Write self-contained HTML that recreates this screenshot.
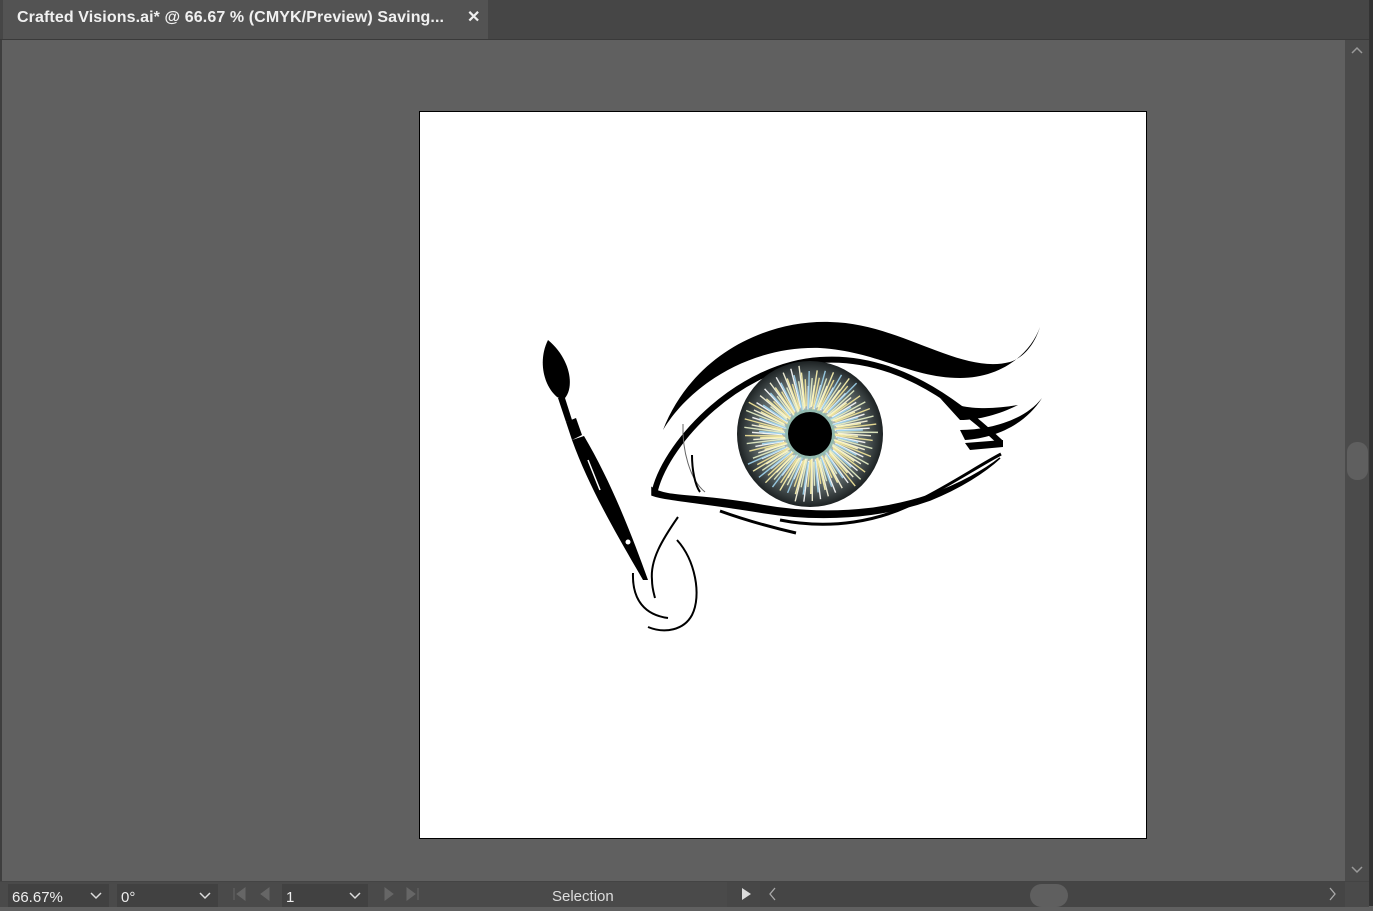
<!DOCTYPE html>
<html><head><meta charset="utf-8"><style>
html,body{margin:0;padding:0;width:1373px;height:906px;overflow:hidden;background:#606060;font-family:"Liberation Sans",sans-serif}
#tabbar{position:absolute;left:0;top:0;width:1373px;height:39px;background:#464646;border-bottom:1px solid #3a3a3a}
#tab{position:absolute;left:3px;top:0;width:485px;height:39px;background:#535353;color:#f0f0f0;font-weight:bold;font-size:16px;line-height:36px}
#tab span{position:absolute;left:14px;letter-spacing:0.1px}
#tab b{position:absolute;left:464px;font-size:16px}
#leftedge{position:absolute;left:0;top:40px;width:2px;height:841px;background:#3e3e3e}
#vscroll{position:absolute;left:1345px;top:40px;width:24px;height:841px;background:#4b4b4b}
#rightedge{position:absolute;left:1369px;top:0;width:4px;height:906px;background:#333}
#thumb{position:absolute;left:1347px;top:442px;width:21px;height:38px;border-radius:10px;background:#5f5f5f}
#art{position:absolute;left:419px;top:111px;width:726px;height:726px;background:#fff;border:1px solid #000}
#bottom{position:absolute;left:0;top:881px;width:1369px;height:25px;background:#4a4a4a;border-top:1px solid #444}
.fld{position:absolute;top:2px;height:23px;background:#414141;color:#eee;font-size:15px;line-height:27px}
</style></head><body>
<div id="tabbar"><div id="tab"><span>Crafted Visions.ai* @ 66.67 % (CMYK/Preview) Saving...</span><b>✕</b></div></div>
<div id="leftedge"></div>
<div id="vscroll"></div>
<div id="thumb"></div>
<div id="rightedge"></div>
<svg style="position:absolute;left:1350px;top:46px" width="14" height="10"><path d="M2 7 L7 2 L12 7" stroke="#9a9a9a" stroke-width="1.5" fill="none"/></svg>
<svg style="position:absolute;left:1350px;top:864px" width="14" height="10"><path d="M2 3 L7 8 L12 3" stroke="#9a9a9a" stroke-width="1.5" fill="none"/></svg>
<div id="art"></div>
<svg style="position:absolute;left:0;top:0" width="1373" height="906">
<defs>
<radialGradient id="ir" cx="50%" cy="50%" r="50%">
<stop offset="0" stop-color="#dfe8e6"/><stop offset="0.45" stop-color="#9aa5a4"/><stop offset="0.8" stop-color="#4d5657"/><stop offset="1" stop-color="#1d2223"/>
</radialGradient>
</defs>
<path d="M663 430 C690 360 760 320 830 322 C900 323 960 375 1010 362 C1025 357 1035 343 1040 327 C1030 355 1000 378 960 378 C910 378 880 352 820 348 C750 346 690 385 663 430Z" fill="#000"/>
<path d="M655 490 C668 440 740 365 820 360 C890 355 950 395 1000 442" stroke="#000" stroke-width="6" fill="none"/>
<path d="M940 398 C960 410 990 410 1018 405 C1000 414 980 420 960 420Z" fill="#000"/>
<path d="M960 430 C990 430 1025 420 1042 398 C1025 425 995 438 965 440Z" fill="#000"/>
<path d="M965 443 L1003 440 L1003 447 L970 450Z" fill="#000"/>
<path d="M652 488 C665 498 700 494 760 505 C820 516 880 512 930 495 C960 484 985 470 1000 458 C985 472 960 488 930 500 C880 518 820 522 760 512 C705 503 665 500 652 495Z" fill="#000" stroke="#000" stroke-width="1.5"/>
<path d="M683 424 C682 450 690 480 705 492" stroke="#666" stroke-width="1" fill="none"/>
<path d="M692 455 C692 470 695 485 700 492" stroke="#000" stroke-width="2" fill="none"/>
<path d="M720 511 C745 520 770 527 796 533" stroke="#000" stroke-width="3" fill="none"/>
<path d="M780 520 C830 530 880 522 920 500 C950 485 980 465 1001 454" stroke="#000" stroke-width="3" fill="none"/>
<circle cx="810" cy="434" r="73" fill="url(#ir)"/>
<g id="rays"></g>
<circle cx="810" cy="434" r="25" fill="#7fb9a9" opacity="0.6"/>
<circle cx="810" cy="434" r="22" fill="#000"/>
<path d="M548 340 C538 360 543 385 557 397 L563 400 C575 390 572 360 548 340Z" fill="#000"/>
<path d="M558 398 L565 398 L572 420 L566 422Z" fill="#000"/>
<path d="M566 422 L576 418 L582 435 L572 440Z" fill="#000"/>
<path d="M572 440 L584 436 C610 480 630 530 648 580 L643 580 C620 540 590 490 572 440Z" fill="#000"/>
<circle cx="628" cy="542" r="2.5" fill="#fff"/>
<path d="M588 460 L600 490" stroke="#fff" stroke-width="1.5"/>
<path d="M678 517 C662 540 650 560 652 580 C652 588 654 594 655 598" stroke="#000" stroke-width="2" fill="none"/>
<path d="M633 573 C632 600 645 615 668 618" stroke="#000" stroke-width="2" fill="none"/>
<path d="M677 540 C695 560 702 595 692 615 C684 630 665 634 648 627" stroke="#000" stroke-width="2" fill="none"/>
</svg>
<div id="bottom">
<div class="fld" style="left:8px;width:75px;padding-left:4px">66.67%</div>
<div class="fld" style="left:85px;width:24px"></div>
<div class="fld" style="left:117px;width:75px;padding-left:4px">0°</div>
<div class="fld" style="left:194px;width:24px"></div>
<div class="fld" style="left:282px;width:60px;padding-left:4px">1</div>
<div class="fld" style="left:344px;width:24px"></div>
<div style="position:absolute;left:552px;top:6px;color:#ddd;font-size:15px">Selection</div>
<div style="position:absolute;left:727px;top:0;width:33px;height:25px;background:#474747"></div>
<div style="position:absolute;left:760px;top:0;width:585px;height:25px;background:#454545"></div>
<div style="position:absolute;left:1030px;top:2px;width:38px;height:23px;border-radius:12px;background:#5f5f5f"></div>
</div>
<svg style="position:absolute;left:0;top:881px" width="1373" height="25">
<path d="M91 12 L96 17 L101 12 M200 12 L205 17 L210 12 M350 12 L355 17 L360 12" stroke="#ddd" stroke-width="1.5" fill="none"/>
<path d="M234 7 V19 M245 7 L237 13 L245 19Z M269 7 L261 13 L269 19Z" stroke="#666" fill="#666"/>
<path d="M385 7 L393 13 L385 19Z M407 7 L415 13 L407 19Z M418 7 V19" stroke="#666" fill="#666"/>
<path d="M742 7 L751 13 L742 19Z" fill="#ddd"/>
<path d="M775 7 L770 13 L775 19 M1330 7 L1335 13 L1330 19" stroke="#aaa" stroke-width="1.3" fill="none"/>
</svg>
<script>
var g=document.getElementById('rays'),s='',cols=['#fff6b0','#f5e79a','#ffffff','#9fd4ef','#e9f2c8','#fffbe0'];
for(var i=0;i<150;i++){var a=i*2*Math.PI/150+(i%3)*0.01,r1=24+(i%5),r2=48+(i*37%22);
var x1=810+r1*Math.cos(a),y1=434+r1*Math.sin(a),x2=810+r2*Math.cos(a+0.05),y2=434+r2*Math.sin(a+0.05);
s+='<line x1="'+x1+'" y1="'+y1+'" x2="'+x2+'" y2="'+y2+'" stroke="'+cols[i%6]+'" stroke-width="1.4" opacity="0.9"/>';}
g.innerHTML=s;
</script>
</body></html>
